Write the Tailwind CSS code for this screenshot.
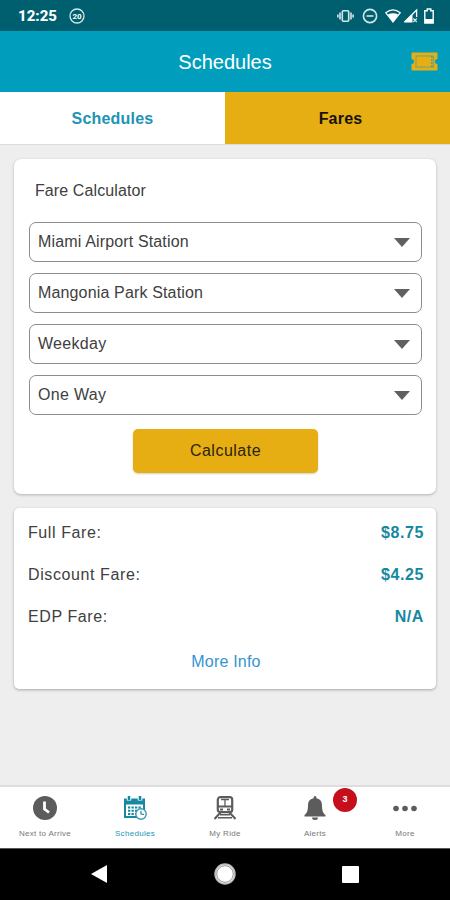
<!DOCTYPE html>
<html lang="en">
<head>
    <meta charset="UTF-8">
    <meta name="viewport" content="width=device-width, initial-scale=1.0">
    <title>Schedules - Fares</title>
    <script src="https://cdn.jsdelivr.net/npm/@tailwindcss/browser@4"></script>
</head>
<body class="bg-[#eeeeee] font-['Liberation_Sans',sans-serif]">
<div class="w-[450px] h-[900px] flex flex-col overflow-hidden text-[#404040]">

    <!-- Status bar -->
    <div class="h-[31px] shrink-0 bg-[#005f6f] flex items-center pl-[18px] pr-4 text-white">
        <span class="font-['Roboto',sans-serif] font-extrabold text-[15px] w-[51px] pt-px">12:25</span>
        <svg class="w-4 h-4" viewBox="0 0 16 16" fill="none" stroke="#d5e6ea">
            <circle cx="8" cy="8" r="7" stroke-width="1.3"/>
            <text x="8" y="11" text-anchor="middle" font-size="8" font-weight="bold" font-family="Roboto, sans-serif" fill="#fff" stroke="none">20</text>
        </svg>
        <div class="ml-auto flex items-center">
            <svg class="w-[17px] h-4" viewBox="0 0 17 16" fill="none" stroke="#d5e6ea" stroke-width="1.6">
                <rect x="5.3" y="2.8" width="6.4" height="10.4" rx="1"/>
                <path d="M3 4.5v7M14 4.5v7M.9 6.5v3M16.1 6.5v3"/>
            </svg>
            <svg class="w-4 h-4 ml-2" viewBox="0 0 16 16" fill="none" stroke="#d5e6ea" stroke-width="1.6">
                <circle cx="8" cy="8" r="6.6"/>
                <path d="M4.5 8h7"/>
            </svg>
            <svg class="w-4 h-4 ml-[7px]" viewBox="0 0 16 16">
                <path d="M.8 4.8Q8-1 15.2 4.8L8 14z" fill="none" stroke="#fff" stroke-width="1.3"/>
                <path d="M2.8 6.6Q8 4 13.2 6.6L8 14z" fill="#fff"/>
            </svg>
            <svg class="w-[15px] h-4 ml-0.5" viewBox="0 0 15 16">
                <path d="M9.500 6V14.500H1z" fill="#fff"/>
                <path d="M1.500 14L13.600 2v7" fill="none" stroke="#fff" stroke-width="1.300"/>
                <path d="M10.300 10.500l3.500 3.500M13.800 10.500l-3.500 3.500" stroke="#d5e6ea" stroke-width="1.200"/>
            </svg>
            <svg class="w-[10px] h-4 ml-[6px]" viewBox="0 0 10 16">
                <path d="M.8 2.800h2.400V1h3.600v1.800h2.400V15H.8z" fill="none" stroke="#fff" stroke-width="1.400"/>
                <path d="M1 11h8v4H1z" fill="#fff"/>
            </svg>
        </div>
    </div>

    <!-- Header -->
    <header class="h-[61px] shrink-0 bg-[#009ebc] grid grid-cols-[1fr_auto_1fr] items-center">
        <h1 class="col-start-2 text-xl text-white">Schedules</h1>
        <svg class="w-[27px] h-[19px] justify-self-end mr-3" viewBox="0 0 27 19">
            <path d="M1.500.5h24q1 0 1 1V7a2.500 2.500 0 0 0 0 5v5.500q0 1-1 1h-24q-1 0-1-1V12a2.500 2.500 0 0 0 0-5V1.500q0-1 1-1z" fill="#e6ae12"/>
            <rect x="5" y="4" width="17.500" height="11" fill="none" stroke="#7da76a" stroke-width="1.200"/>
            <path d="M20.800 4v11" stroke="#55a58a" stroke-width="1.500" stroke-dasharray="2 1"/>
        </svg>
    </header>

    <!-- Tabs -->
    <div class="h-[53px] shrink-0 grid grid-cols-2 font-bold text-base border-b border-[#dcdcdc]">
        <button class="bg-white text-[#2194b4] tracking-[0.2px] pt-px">Schedules</button>
        <button class="bg-[#e6ae12] text-[#17130a] tracking-[0.2px] pl-1.5 pt-px">Fares</button>
    </div>

    <main class="flex-1 px-3.5 pt-3.5">
        <!-- Fare calculator -->
        <section class="h-[335px] bg-white rounded-[7px] shadow-[0_1px_3px_rgba(0,0,0,0.25)] pl-[15px] pr-3.5 pt-[22px]">
            <h2 class="h-[41px] pl-1.5 text-base leading-5 tracking-[0.1px]">Fare Calculator</h2>
            <div class="flex flex-col gap-[11px] text-base tracking-[0.15px]">
                <div class="h-10 border border-[#8c8c8c] rounded-[7px] flex items-center justify-between pl-2 pr-[11px]">
                    <span>Miami Airport Station</span>
                    <svg class="w-4 h-[9px]" viewBox="0 0 16 9"><path d="M0 0h16L8 9z" fill="#606060"/></svg>
                </div>
                <div class="h-10 border border-[#8c8c8c] rounded-[7px] flex items-center justify-between pl-2 pr-[11px]">
                    <span>Mangonia Park Station</span>
                    <svg class="w-4 h-[9px]" viewBox="0 0 16 9"><path d="M0 0h16L8 9z" fill="#606060"/></svg>
                </div>
                <div class="h-10 border border-[#8c8c8c] rounded-[7px] flex items-center justify-between pl-2 pr-[11px] tracking-[0.3px]">
                    <span>Weekday</span>
                    <svg class="w-4 h-[9px]" viewBox="0 0 16 9"><path d="M0 0h16L8 9z" fill="#606060"/></svg>
                </div>
                <div class="h-10 border border-[#8c8c8c] rounded-[7px] flex items-center justify-between pl-2 pr-[11px] tracking-[0.3px]">
                    <span>One Way</span>
                    <svg class="w-4 h-[9px]" viewBox="0 0 16 9"><path d="M0 0h16L8 9z" fill="#606060"/></svg>
                </div>
            </div>
            <button class="block mx-auto mt-[14px] w-[185px] h-11 rounded-[5px] bg-[#e6ae12] text-[#2a2410] text-base tracking-[0.5px] shadow-[0_1px_2px_rgba(0,0,0,0.2)]">Calculate</button>
        </section>

        <!-- Results -->
        <section class="mt-3.5 h-[181px] bg-white rounded-[5px] shadow-[0_1px_3px_rgba(0,0,0,0.3)] pl-3.5 pr-3 pt-1 text-base tracking-[0.6px]">
            <div class="h-[42px] flex items-center justify-between">
                <span>Full Fare:</span>
                <span class="font-bold text-[#1688a0]">$8.75</span>
            </div>
            <div class="h-[42px] flex items-center justify-between">
                <span>Discount Fare:</span>
                <span class="font-bold text-[#1688a0]">$4.25</span>
            </div>
            <div class="h-[42px] flex items-center justify-between">
                <span>EDP Fare:</span>
                <span class="font-bold text-[#1688a0]">N/A</span>
            </div>
            <a class="h-12 flex items-center justify-center text-[#3494d0] tracking-[0.2px]">More Info</a>
        </section>
    </main>

    <!-- Bottom navigation -->
    <nav class="h-[63px] shrink-0 bg-white border-t-2 border-[#dedede] grid grid-cols-5 text-[8px] text-[#777777]">
        <div class="flex flex-col items-center pt-[9px]">
            <svg class="w-6 h-6" viewBox="0 0 24 24">
                <circle cx="12" cy="12" r="12" fill="#5c5c5c"/>
                <path d="M11.500 5.500v7.500l4.500 3.500" fill="none" stroke="#fff" stroke-width="2.800"/>
            </svg>
            <span class="mt-2 tracking-[0.3px]">Next to Arrive</span>
        </div>
        <div class="flex flex-col items-center pt-[9px] text-[#2194b4]">
            <svg class="w-6 h-6" viewBox="0 0 24 24">
                <path d="M1 2.500h21V22H1z" fill="#1688a0"/>
                <path d="M3 8.500h17v11.500H3z" fill="#fff"/>
                <path d="M6 0v4.500M17 0v4.500" stroke="#fff" stroke-width="4.500"/>
                <path d="M6 0v4M17 0v4" stroke="#1688a0" stroke-width="2.500"/>
                <path d="M5 11.500h13M5 14.800h9M5 18h8" stroke="#1688a0" stroke-width="2" stroke-dasharray="2.300 1.200"/>
                <circle cx="18" cy="18" r="5.200" fill="#fff" stroke="#3a9ab4" stroke-width="1.400"/>
                <path d="M18 14.800V18l3 .3" fill="none" stroke="#1688a0" stroke-width="1.200"/>
            </svg>
            <span class="mt-2 tracking-[0.3px]">Schedules</span>
        </div>
        <div class="flex flex-col items-center pt-[9px]">
            <svg class="w-6 h-6" viewBox="0 0 24 24" fill="none" stroke="#5c5c5c">
                <rect x="4.800" y="1.200" width="14.400" height="15" rx="2.500" stroke-width="2.200"/>
                <path d="M5 10.500h14" stroke-width="2"/>
                <path d="M8 3.500h8M12 3.500v7" stroke-width="1.300"/>
                <path d="M7 13.500h3M14 13.500h3" stroke-width="2.200"/>
                <path d="M7.500 16.500L1.500 23M16.500 16.500l6 6.500" stroke-width="2"/>
                <path d="M7 18.800h10M5 21.800h14" stroke-width="1.500"/>
            </svg>
            <span class="mt-2 tracking-[0.3px]">My Ride</span>
        </div>
        <div class="relative flex flex-col items-center pt-[9px]">
            <svg class="w-6 h-6" viewBox="0 0 24 24" fill="#5c5c5c">
                <path d="M12 0q1.500 0 1.500 2.200c4 .8 5.500 3.600 5.500 7.300 0 5 1 7.500 3.500 9.500v1.500h-21V19C4 17 5 14.500 5 9.500c0-3.700 1.500-6.500 5.500-7.300Q10.500 0 12 0z"/>
                <path d="M9 21.500h6a3 2.500 0 0 1-6 0z"/>
            </svg>
            <span class="mt-2 tracking-[0.3px]">Alerts</span>
            <span class="absolute left-[63px] top-[1px] w-6 h-6 rounded-full bg-[#c5101c] text-white text-[9px] font-bold flex items-center justify-center">3</span>
        </div>
        <div class="flex flex-col items-center pt-[9px]">
            <svg class="w-6 h-6" viewBox="0 0 24 24" fill="#5c5c5c">
                <circle cx="3" cy="12.500" r="2.800"/>
                <circle cx="12" cy="12.500" r="2.800"/>
                <circle cx="21" cy="12.500" r="2.800"/>
            </svg>
            <span class="mt-2 tracking-[0.3px]">More</span>
        </div>
    </nav>

    <!-- System buttons -->
    <div class="h-[52px] shrink-0 bg-black border-t border-[#555555] flex items-center justify-between px-[91px] pb-px">
        <svg class="w-4 h-[18px]" viewBox="0 0 16 18"><path d="M0 9L16 0v18z" fill="#fff"/></svg>
        <svg class="w-[22px] h-[22px]" viewBox="0 0 22 22">
            <circle cx="11" cy="11" r="10" fill="#fff" stroke="#bbb" stroke-width="1.500"/>
            <circle cx="11" cy="11" r="8.300" fill="#fff" stroke="#777" stroke-width=".8"/>
        </svg>
        <span class="w-[17px] h-[17px] rounded-[1px] bg-white"></span>
    </div>
</div>
</body>
</html>
